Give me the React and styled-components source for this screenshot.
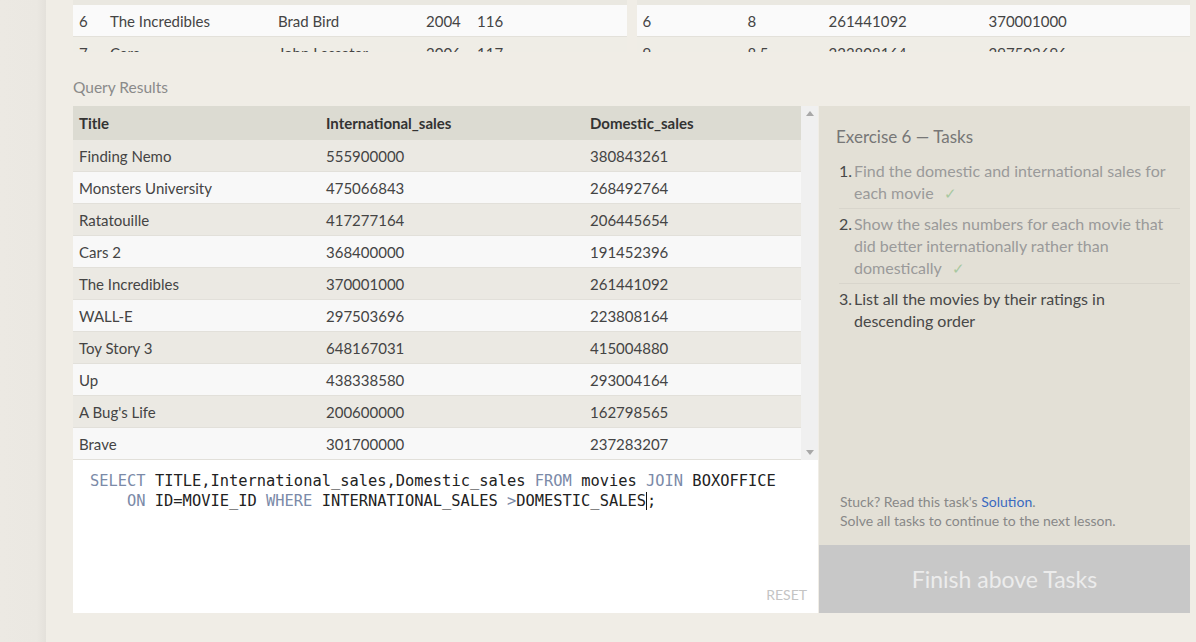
import React from "react";
import styled, { createGlobalStyle } from "styled-components";

const GlobalStyle = createGlobalStyle`
  html, body {
    margin: 0;
    padding: 0;
    background: #f0ede6;
  }
  body {
    font-family: "Lato", "Open Sans", sans-serif;
    color: #444;
  }
`;

const prevMovies = [
  ["6", "The Incredibles", "Brad Bird", "2004", "116"],
  ["7", "Cars", "John Lasseter", "2006", "117"],
];

const prevBoxoffice = [
  ["6", "8", "261441092", "370001000"],
  ["9", "8.5", "223808164", "297503696"],
];

const results = [
  ["Finding Nemo", "555900000", "380843261"],
  ["Monsters University", "475066843", "268492764"],
  ["Ratatouille", "417277164", "206445654"],
  ["Cars 2", "368400000", "191452396"],
  ["The Incredibles", "370001000", "261441092"],
  ["WALL-E", "297503696", "223808164"],
  ["Toy Story 3", "648167031", "415004880"],
  ["Up", "438338580", "293004164"],
  ["A Bug's Life", "200600000", "162798565"],
  ["Brave", "301700000", "237283207"],
];

const tasks = [
  { text: "Find the domestic and international sales for each movie", done: true },
  {
    text: "Show the sales numbers for each movie that did better internationally rather than domestically",
    done: true,
  },
  { text: "List all the movies by their ratings in descending order", done: false },
];

const App = () => {
  return (
    <>
      <GlobalStyle />
      <Page>
        <Gutter />
        <Content>
          <TopTables>
            <PrevTable>
              {prevMovies.map((row, i) => (
                <PrevRow key={i} $cols="31px 168px 148px 51px 1fr" $alt={i % 2 === 1}>
                  {row.map((cell, j) => (
                    <span key={j}>{cell}</span>
                  ))}
                </PrevRow>
              ))}
            </PrevTable>
            <PrevTable>
              {prevBoxoffice.map((row, i) => (
                <PrevRow key={i} $cols="105px 81px 160px 1fr" $alt={i % 2 === 1}>
                  {row.map((cell, j) => (
                    <span key={j}>{cell}</span>
                  ))}
                </PrevRow>
              ))}
            </PrevTable>
          </TopTables>

          <SectionLabel>Query Results</SectionLabel>

          <Workspace>
            <LeftColumn>
              <ResultsArea>
                <ResultsTable>
                  <ResultRow $header>
                    <span>Title</span>
                    <span>International_sales</span>
                    <span>Domestic_sales</span>
                  </ResultRow>
                  {results.map((row, i) => (
                    <ResultRow key={row[0]} $alt={i % 2 === 1}>
                      {row.map((cell, j) => (
                        <span key={j}>{cell}</span>
                      ))}
                    </ResultRow>
                  ))}
                </ResultsTable>
                <Scrollbar>
                  <Arrow viewBox="0 0 8 5">
                    <path d="M0 5 L4 0 L8 5 Z" />
                  </Arrow>
                  <Arrow viewBox="0 0 8 5">
                    <path d="M0 0 L4 5 L8 0 Z" />
                  </Arrow>
                </Scrollbar>
              </ResultsArea>

              <Editor>
                <Code>
                  <CodeLine>
                    <Kw>SELECT</Kw> TITLE,International_sales,Domestic_sales <Kw>FROM</Kw> movies{" "}
                    <Kw>JOIN</Kw> BOXOFFICE
                  </CodeLine>
                  <CodeLine $indent>
                    <Kw>ON</Kw> ID=MOVIE_ID <Kw>WHERE</Kw> INTERNATIONAL_SALES <Kw>&gt;</Kw>DOMESTIC_SALES
                    <Caret />;
                  </CodeLine>
                </Code>
                <ResetButton>RESET</ResetButton>
              </Editor>
            </LeftColumn>

            <TaskPanel>
              <TaskBody>
                <TaskTitle>Exercise 6 — Tasks</TaskTitle>
                <TaskList>
                  {tasks.map((task, i) => (
                    <TaskItem key={i} $done={task.done} $last={i === tasks.length - 1}>
                      <TaskNumber>{i + 1}.</TaskNumber>
                      <TaskText>
                        {task.text}
                        {task.done && <Check>✓</Check>}
                      </TaskText>
                    </TaskItem>
                  ))}
                </TaskList>
                <Hint>
                  Stuck? Read this task's <HintLink>Solution</HintLink>.
                  <br />
                  Solve all tasks to continue to the next lesson.
                </Hint>
              </TaskBody>
              <FinishButton>Finish above Tasks</FinishButton>
            </TaskPanel>
          </Workspace>
        </Content>
      </Page>
    </>
  );
};

const Page = styled.div`
  display: flex;
  width: 1196px;
  height: 642px;
  overflow: hidden;
  background: #f0ede6;
`;

const Gutter = styled.div`
  width: 46px;
  flex-shrink: 0;
  background: linear-gradient(to right, #ece9e3 0%, #ebe8e2 80%, #e4e1db 100%);
`;

const Content = styled.div`
  flex: 1;
  padding: 0 6px 0 27px;
  display: flex;
  flex-direction: column;
`;

const TopTables = styled.div`
  display: flex;
  gap: 10px;
  height: 52px;
  overflow: hidden;
`;

const PrevTable = styled.div`
  flex: 1;
  padding-top: 5px;
  background: #eae8e1;
`;

const PrevRow = styled.div`
  display: grid;
  grid-template-columns: ${(p) => p.$cols};
  height: 32px;
  align-items: center;
  padding-left: 6px;
  font-size: 15px;
  color: #444;
  background: ${(p) => (p.$alt ? "#efede6" : "#fafafa")};
  border-bottom: 1px solid #e3e1da;
  box-sizing: border-box;
`;

const SectionLabel = styled.div`
  margin: 25px 0 9px;
  line-height: 20px;
  font-size: 15.5px;
  color: #8a8a8a;
`;

const Workspace = styled.div`
  display: flex;
  height: 507px;
`;

const LeftColumn = styled.div`
  width: 745px;
  display: flex;
  flex-direction: column;
`;

const ResultsArea = styled.div`
  display: flex;
  height: 354px;
`;

const ResultsTable = styled.div`
  flex: 1;
`;

const ResultRow = styled.div`
  display: grid;
  grid-template-columns: 247px 264px 1fr;
  align-items: center;
  padding-left: 6px;
  box-sizing: border-box;
  height: ${(p) => (p.$header ? "34px" : "32px")};
  font-size: 15px;
  font-weight: ${(p) => (p.$header ? 700 : 400)};
  color: ${(p) => (p.$header ? "#333" : "#444")};
  background: ${(p) => (p.$header ? "#dcdbd2" : p.$alt ? "#f8f8f8" : "#ebe9e3")};
  border-bottom: ${(p) => (p.$header ? "none" : "1px solid #e2e0da")};
`;

const Scrollbar = styled.div`
  width: 17px;
  background: #f0f0f0;
  display: flex;
  flex-direction: column;
  justify-content: space-between;
  align-items: center;
  padding: 5px 0;
  box-sizing: border-box;
`;

const Arrow = styled.svg`
  width: 8px;
  height: 5px;
  fill: #a8a8a8;
`;

const Editor = styled.div`
  flex: 1;
  background: #fff;
  display: flex;
  flex-direction: column;
  padding: 11px 11px 10px 17px;
`;

const Code = styled.div`
  font-family: "DejaVu Sans Mono", "Liberation Mono", monospace;
  font-size: 15.4px;
  line-height: 20px;
  color: #222;
  white-space: pre;
`;

const CodeLine = styled.div`
  padding-left: ${(p) => (p.$indent ? "37px" : "0")};
`;

const Kw = styled.span`
  color: #7b8aa8;
`;

const Caret = styled.span`
  display: inline-block;
  width: 1px;
  height: 18px;
  background: #111;
  vertical-align: -4px;
`;

const ResetButton = styled.div`
  margin-top: auto;
  align-self: flex-end;
  font-size: 14px;
  color: #c4c4c4;
  line-height: 16px;
`;

const TaskPanel = styled.div`
  flex: 1;
  margin-left: 1px;
  display: flex;
  flex-direction: column;
  background: #e3e0d6;
`;

const TaskBody = styled.div`
  flex: 1;
  display: flex;
  flex-direction: column;
  padding: 19px 10px 15px 17px;
`;

const TaskTitle = styled.div`
  font-size: 17px;
  line-height: 24px;
  color: #777;
`;

const TaskList = styled.ol`
  list-style: none;
  margin: 11px 0 0;
  padding: 0;
`;

const TaskItem = styled.li`
  display: flex;
  font-size: 16px;
  line-height: 22px;
  color: ${(p) => (p.$done ? "#9a9a9a" : "#484848")};
  padding: 0 0 4px;
  margin-bottom: 4px;
  border-bottom: ${(p) => (p.$last ? "none" : "1px solid #d8d5cc")};
  margin-left: 3px;
`;

const TaskNumber = styled.span`
  width: 15px;
  flex-shrink: 0;
  color: #484848;
`;

const TaskText = styled.span`
  flex: 1;
  padding-right: 8px;
`;

const Check = styled.span`
  display: inline-block;
  margin-left: 10px;
  color: #a8c8a0;
  font-size: 15px;
`;

const Hint = styled.div`
  margin-top: auto;
  font-size: 14px;
  line-height: 19px;
  color: #888;
  padding-left: 4px;
`;

const HintLink = styled.a`
  color: #3a6ac0;
  text-decoration: none;
`;

const FinishButton = styled.div`
  height: 68px;
  display: flex;
  align-items: center;
  justify-content: center;
  background: #c8c8c8;
  color: #ececec;
  font-size: 23px;
`;

export default App;
